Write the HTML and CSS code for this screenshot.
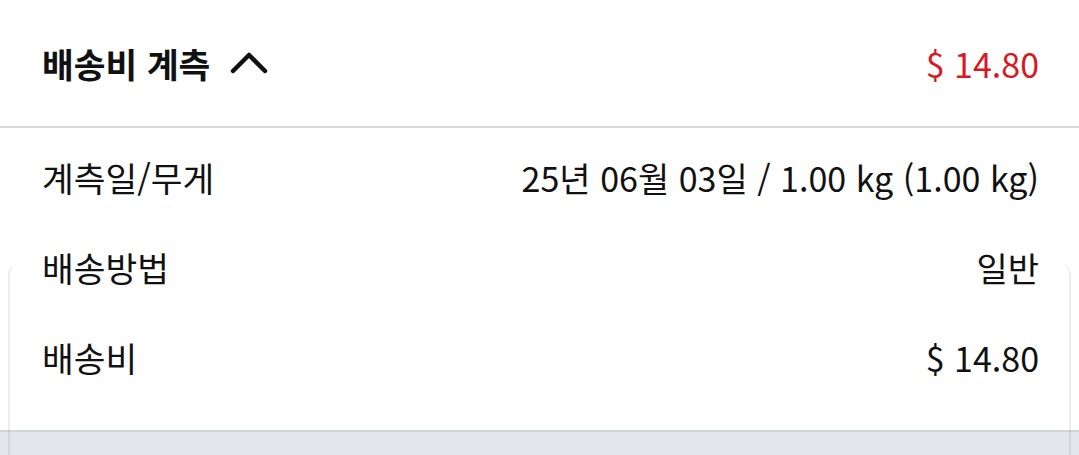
FILE: index.html
```html
<!DOCTYPE html>
<html lang="ko">
<head>
  <meta charset="UTF-8">
  <meta name="viewport" content="width=device-width, initial-scale=1.0">
  <title>배송비 계측</title>
  <link rel="stylesheet" href="styles.css">
</head>
<body>
  <div class="panel">
    <div class="panel-header">
      <div class="panel-title">
        <span>배송비 계측</span>
        <svg class="chevron" width="38" height="24" viewBox="0 0 38 24">
          <path d="M3 21 L19 5 L35 21" fill="none" stroke="#111" stroke-width="4.5" stroke-linecap="round" stroke-linejoin="round"/>
        </svg>
      </div>
      <div class="panel-total">$ 14.80</div>
    </div>

    <div class="panel-body">
      <div class="info-row">
        <span class="label">계측일/무게</span>
        <span class="value">25년 06월 03일 / 1.00 kg (1.00 kg)</span>
      </div>
      <div class="info-row">
        <span class="label">배송방법</span>
        <span class="value">일반</span>
      </div>
      <div class="info-row">
        <span class="label">배송비</span>
        <span class="value">$ 14.80</span>
      </div>
    </div>

    <div class="footer-band"></div>
    <div class="ghost-card"></div>
  </div>
</body>
</html>
```

FILE: styles.css
```css
body {
  margin: 0;
  font-family: "Noto Sans CJK KR", "Noto Sans", sans-serif;
  background-color: #ffffff;
  color: #111111;
}

.panel {
  position: relative;
  height: 455px;
  overflow: hidden;
}

.panel-header {
  display: flex;
  align-items: center;
  justify-content: space-between;
  height: 128px;
  padding: 0 40px 0 42px;
  border-bottom: 2px solid #d6d8db;
  box-sizing: border-box;
}

.panel-title {
  display: flex;
  align-items: center;
  gap: 20px;
  font-size: 34.5px;
  font-weight: 700;
}

.chevron {
  margin-top: -2px;
}

.panel-total {
  font-size: 34px;
  color: #d71a21;
}

.panel-body {
  padding: 4px 40px 0 42px;
  height: 302px;
  box-sizing: border-box;
}

.info-row {
  display: flex;
  align-items: center;
  justify-content: space-between;
  height: 90px;
}

.label {
  font-size: 34.5px;
}

.value {
  font-size: 34px;
}

.footer-band {
  height: 25px;
  background-color: #e3e6ea;
  border-top: 2px solid #d1d5da;
}

.ghost-card {
  position: absolute;
  top: 264px;
  left: 8px;
  right: 8px;
  bottom: -20px;
  border: 2px solid rgba(0, 0, 0, 0.07);
  border-top: 0;
  border-radius: 10px 10px 0 0;
  pointer-events: none;
}
```
